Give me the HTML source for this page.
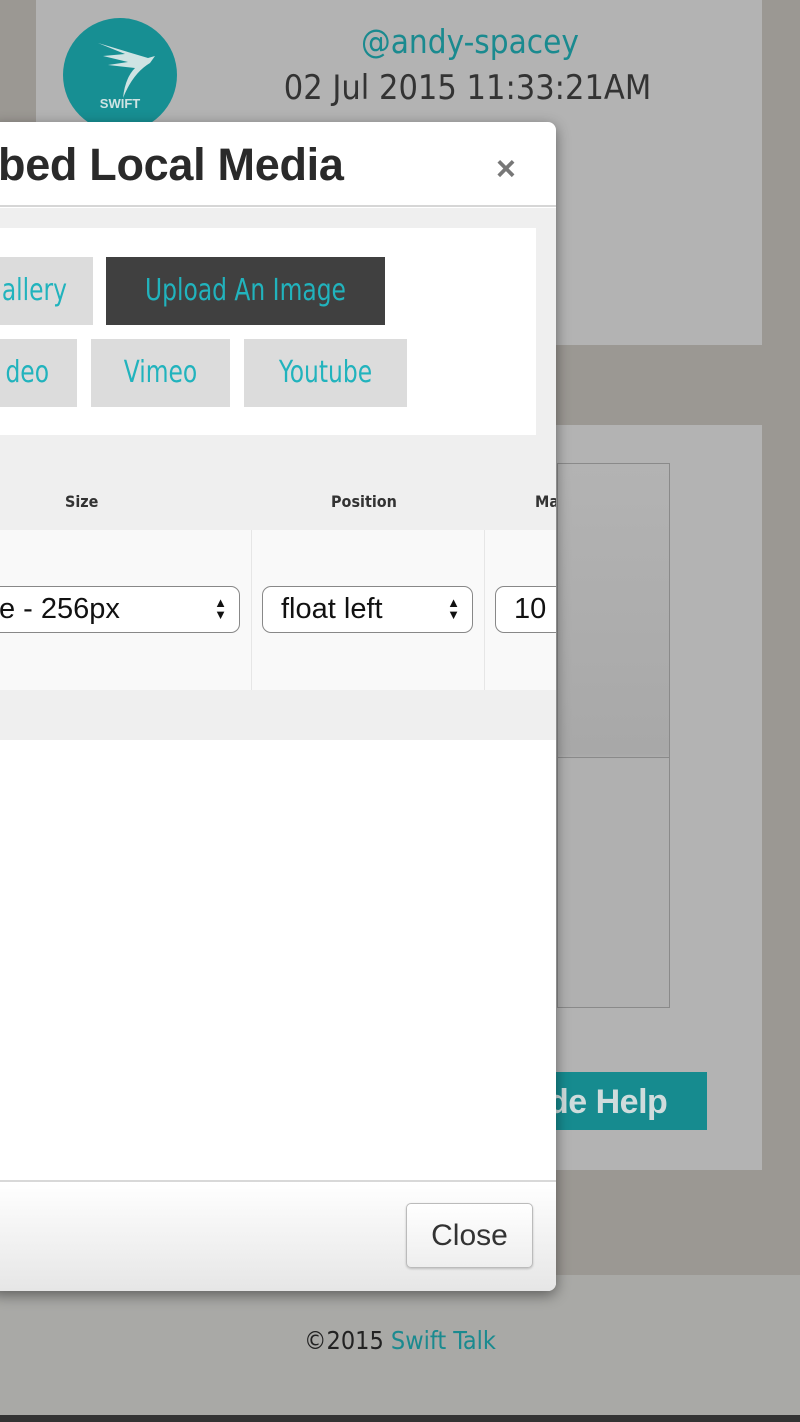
<!DOCTYPE html>
<html><head><meta charset="utf-8"><style>
*{margin:0;padding:0;box-sizing:border-box}
body{width:800px;height:1422px;position:relative;overflow:hidden;background:#9b9893;font-family:"Liberation Sans",sans-serif}
.a{position:absolute}
.btn{position:absolute;background:#dcdcdc;color:#21b3bd;font-size:26px;display:flex;align-items:center;justify-content:center;font-family:"DejaVu Sans Condensed","DejaVu Sans",sans-serif}
.btn span{display:inline-block;transform:scaleY(1.15)}
.sel{position:absolute;height:47px;border:1px solid #888;border-radius:9px;background:#fff;font-size:29px;color:#111;padding-left:18px;line-height:45px}
.arr{position:absolute;right:12px;top:10px;font-size:13px;line-height:12px;color:#111}
.lbl{position:absolute;top:493px;font-size:16px;font-weight:bold;color:#333;font-family:'DejaVu Sans Condensed',sans-serif}
</style></head><body>
<div class="a" style="left:36px;top:0;width:726px;height:345px;background:#b3b3b3"></div>
<div class="a" style="left:36px;top:425px;width:726px;height:745px;background:#b3b3b3"></div>
<div class="a" style="left:557px;top:463px;width:113px;height:545px;border:1px solid #8a8a8a;background:linear-gradient(#b3b3b3,#a8a8a8 290px,#b0b0b0 295px)"></div>
<div class="a" style="left:557px;top:757px;width:113px;height:1px;background:#8a8a8a"></div>
<div class="a" style="left:540px;top:1072px;width:167px;height:58px;background:#168b8f;color:#cfdcdc;font-weight:bold;font-size:34px;line-height:60px;padding-left:8px;letter-spacing:-0.5px">de Help</div>
<div class="a" style="left:0;top:1275px;width:800px;height:140px;background:#a9a9a6"></div>
<div class="a" style="left:0;top:1415px;width:800px;height:7px;background:#333"></div>
<div class="a" style="left:0;top:1326px;width:800px;text-align:center;font-size:25px;color:#222;font-family:'DejaVu Sans Condensed',sans-serif;padding-left:0">©2015 <span style="color:#1a8a8f">Swift Talk</span></div>
<div class="a" style="left:63px;top:18px;width:114px;height:114px;border-radius:50%;background:#178f93"></div>
<svg class="a" style="left:63px;top:18px" width="114" height="114"><path d="M35 25 L85 40 L92 38 L87 45 Q70 55 60 80 Q62 60 72 50 L45 47 L65 44 L40 38 L62 36 Z" fill="#cfe3e3"/><text x="57" y="90" font-size="13" font-weight="bold" fill="#cfe3e3" text-anchor="middle" font-family="Liberation Sans">SWIFT</text></svg>
<div class="a" style="left:290px;top:22px;width:360px;text-align:center;font-size:33px;color:#1a8a8f;font-family:'DejaVu Sans Condensed',sans-serif">@andy-spacey</div>
<div class="a" style="left:260px;top:68px;width:415px;text-align:center;font-size:34px;color:#333;font-family:'DejaVu Sans Condensed',sans-serif">02 Jul 2015 11:33:21AM</div>
<!-- modal -->
<div class="a" style="left:-10px;top:122px;width:566px;height:1169px;background:#fff;border-radius:8px;box-shadow:0 4px 14px rgba(0,0,0,.45);overflow:hidden">
<div class="a" style="left:0;top:0;width:566px;height:85px;border-bottom:2px solid #d6d6d6"></div>
<div class="a" style="left:8px;top:17px;font-size:45px;font-weight:bold;color:#2a2a2a;letter-spacing:-0.3px">bed Local Media</div>
<div class="a" style="left:506px;top:28px;font-size:34px;font-weight:bold;color:#777">×</div>
<div class="a" style="left:0;top:86px;width:566px;height:972px;background:#efefef"></div>
<div class="a" style="left:0;top:106px;width:546px;height:207px;background:#fff"></div>
<div class="btn" style="left:0;top:135px;width:103px;height:68px;justify-content:flex-end;padding-right:26px"><span>allery</span></div>
<div class="btn" style="left:116px;top:135px;width:279px;height:68px;background:#404040"><span>Upload An Image</span></div>
<div class="btn" style="left:0;top:217px;width:87px;height:68px;justify-content:flex-end;padding-right:28px"><span>deo</span></div>
<div class="btn" style="left:101px;top:217px;width:139px;height:68px"><span>Vimeo</span></div>
<div class="btn" style="left:254px;top:217px;width:163px;height:68px"><span>Youtube</span></div>
<div class="a" style="left:0;top:408px;width:566px;height:160px;background:#f9f9f9"></div>
<div class="a" style="left:261px;top:408px;width:1px;height:160px;background:#e6e6e6"></div>
<div class="a" style="left:494px;top:408px;width:1px;height:160px;background:#e6e6e6"></div>
<div class="lbl" style="left:75px;top:370px">Size</div>
<div class="lbl" style="left:341px;top:370px">Position</div>
<div class="lbl" style="left:545px;top:370px">Ma</div>
<div class="sel" style="left:-10px;top:464px;width:260px">e - 256px<div class="arr">▲<br>▼</div></div>
<div class="sel" style="left:272px;top:464px;width:211px">float left<div class="arr">▲<br>▼</div></div>
<div class="sel" style="left:505px;top:464px;width:80px">10</div>
<div class="a" style="left:0;top:618px;width:566px;height:440px;background:#fff"></div>
<div class="a" style="left:0;top:1058px;width:566px;height:111px;border-top:2px solid #d8d8d8;background:linear-gradient(#fff,#e6e6e6)"></div>
<div class="a" style="left:416px;top:1081px;width:127px;height:65px;border:1px solid #bbb;border-radius:5px;background:linear-gradient(#fff,#eee);font-size:30px;color:#333;text-align:center;line-height:63px;box-shadow:0 1px 2px rgba(0,0,0,.2)">Close</div>
</div>
</body></html>
